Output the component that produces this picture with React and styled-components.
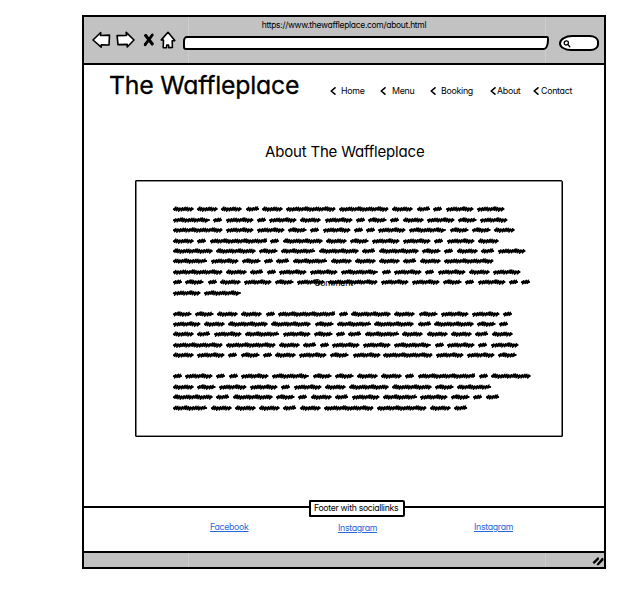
import React from "react";
import styled, { createGlobalStyle } from "styled-components";

const Global = createGlobalStyle`
  * { box-sizing: border-box; }
  body { margin: 0; background: #fff; color: #000; font-family: Inter, "Liberation Sans", sans-serif; font-feature-settings: "cv11"; }
`;

const seams = `linear-gradient(to right, transparent 104px, #cdcdcd 104px, #cdcdcd 105px, transparent 105px, transparent 461px, #cdcdcd 461px, #cdcdcd 462px, transparent 462px)`;

const Page = styled.div`
  width: 633px;
  height: 597px;
  padding: 15px 0 0 82px;
  overflow: hidden;
`;
const Browser = styled.div`
  width: 524px;
  height: 554px;
  border: 2px solid #000;
  display: flex;
  flex-direction: column;
`;
const Chrome = styled.header`
  height: 48px;
  flex: none;
  background: ${seams}, #c2c2c2;
  border-bottom: 2px solid #000;
`;
const Url = styled.div`
  height: 14px;
  line-height: 16px;
  text-align: center;
  font-size: 8.5px;
  white-space: nowrap;
  letter-spacing: -0.31px;
`;
const Toolbar = styled.div`
  display: flex;
  align-items: center;
  height: 20px;
  padding-left: 8px;
`;
const Icon = styled.svg`
  flex: none;
  display: block;
  margin-top: ${(p) => p.$top || 0}px;
  margin-right: ${(p) => p.$gap || 0}px;
  fill: #fff;
  stroke: #000;
  stroke-width: 1.6;
  stroke-linejoin: round;
  stroke-linecap: round;
`;
const Address = styled.div`
  width: 366px;
  height: 14px;
  margin-top: 3px;
  margin-right: 10px;
  background: #fff;
  border: 2px solid #000;
  border-radius: 4px 2px 5px 3px / 5px 3px 10px 3px;
`;
const Search = styled.div`
  width: 40px;
  height: 16px;
  margin-top: 3px;
  padding: 3px 0 0 2px;
  background: #fff;
  border: 2px solid #000;
  border-radius: 14px 10px 9px 13px / 9px 7px 7px 8px;
`;
const Masthead = styled.div`
  display: flex;
  height: 67px;
  flex: none;
  padding-left: 25px;
`;
const Title = styled.h1`
  margin: 4px 0 0;
  width: 221px;
  font-size: 24.8px;
  line-height: 32px;
  font-weight: 400;
  white-space: nowrap;
  letter-spacing: -0.2px;
  -webkit-text-stroke: 0.3px #000;
`;
const Nav = styled.nav`
  display: flex;
  height: 14px;
  margin-top: 19px;
`;
const NavItem = styled.a`
  display: flex;
  align-items: center;
  width: ${(p) => p.$w}px;
  gap: ${(p) => p.$gap}px;
  font-size: 8.8px;
  line-height: 14px;
  letter-spacing: -0.27px;
  white-space: nowrap;
`;
const Heading = styled.h2`
  margin: 0 0 0 181px;
  height: 48px;
  font-size: 15px;
  line-height: 40px;
  font-weight: 400;
  white-space: nowrap;
  letter-spacing: -0.19px;
`;
const Panel = styled.section`
  position: relative;
  flex: none;
  width: 428px;
  height: 257px;
  margin-left: 51px;
  padding: 23px 0 0 37px;
  border: 1px solid #000;
  border-radius: 1px 2px 1px 1px;
  box-shadow: inset 0 0 0 0.6px #222;
`;
const Copy = styled.div`
  display: flex;
  flex-direction: column;
`;
const Line = styled.div`
  display: flex;
  align-items: center;
  height: 10.45px;
  gap: 3.6px;
`;
const Scribble = styled.svg`
  display: block;
  flex: none;
  overflow: visible;
  fill: none;
  stroke: #000;
  stroke-linecap: round;
  stroke-linejoin: round;
`;
const Note = styled.span`
  position: absolute;
  left: 178px;
  top: 96px;
  font-size: 8.8px;
  line-height: 12px;
  letter-spacing: -0.2px;
`;
const Footer = styled.footer`
  position: relative;
  flex: none;
  height: 45px;
  margin-top: auto;
  border-top: 2px solid #000;
  display: flex;
`;
const Badge = styled.div`
  position: absolute;
  left: 225px;
  top: -8px;
  width: 96px;
  height: 17px;
  padding-left: 3px;
  background: #fff;
  border: 2px solid #000;
  border-radius: 1px 2px 2px 1px;
  font-size: 8.7px;
  line-height: 13px;
  letter-spacing: -0.31px;
  white-space: nowrap;
`;
const Social = styled.a`
  margin-top: ${(p) => p.$top}px;
  margin-left: ${(p) => p.$left}px;
  width: 40px;
  flex: none;
  color: #2968d8;
  font-size: 8.8px;
  line-height: 12px;
  letter-spacing: -0.33px;
  text-decoration: underline;
  white-space: nowrap;
`;
const Status = styled.div`
  flex: none;
  height: 16px;
  background: ${seams}, #c2c2c2;
  border-top: 2px solid #000;
  display: flex;
  justify-content: flex-end;
  padding: 3px 0 0 0;
`;

const WIDTHS = { a: 8.9, b: 13.1, c: 18.5, d: 20.6, e: 27.4, f: 34.1, g: 36.8, h: 39.6, i: 49.4, j: 57.1 };
const LINES = [
  "dddbdiidbaee",
  "gaeaedeacadece",
  "ieecaeaaegccd",
  "dajahdceeaed",
  "hhcfhbhcadbe",
  "fecabfdddbdi",
  "idbaeegaeaede",
  "acadeceieecaeaa",
  "eg",
  "",
  "ccddajahdceea",
  "edhhcfhbhca",
  "dbefecabfdddbd",
  "iidbaeegaeae",
  "deacadeceieec",
  "",
  "aeaaegccddajah",
  "dceeaedhhcf",
  "hbhcadbefecab",
  "fdddbdiidb",
];

const JITTER = [0.3, -0.6, 0.8, -0.1, 0.6, -0.8, 0.1, 0.4, -0.3];

function Word({ kind }) {
  const w = WIDTHS[kind];
  const seed = kind.charCodeAt(0);
  let d = "M0.8 3.3";
  let x = 2;
  let n = 0;
  while (x < w - 1.6) {
    const j = JITTER[(n * 5 + seed) % JITTER.length];
    d += `L${(x + 0.9).toFixed(1)} ${(1.4 + j * 0.6).toFixed(1)}L${(x - 0.5).toFixed(1)} ${(4.7 + j * 0.7).toFixed(1)}`;
    x += 2.2 + j * 0.7;
    n += 1;
  }
  d += `L${(w - 0.8).toFixed(1)} 2.9`;
  return (
    <Scribble width={w} height="6" viewBox={`0 0 ${w} 6`}>
      <path d={d} strokeWidth="1.35" />
      <path d={`M0.9 3.3L${w - 0.9} 3`} strokeWidth="2" />
    </Scribble>
  );
}

function Chevron() {
  return (
    <Icon width="6" height="8" viewBox="0 0 6 8">
      <path d="M5 .8L1.2 4 4.9 7.2" fill="none" />
    </Icon>
  );
}

const NAV = [
  { label: "Home", w: 50, gap: 5 },
  { label: "Menu", w: 50, gap: 6 },
  { label: "Booking", w: 60, gap: 5 },
  { label: "About", w: 43, gap: 1 },
  { label: "Contact", w: 44, gap: 2 },
];

export default function App() {
  return (
    <Page>
      <Global />
      <Browser>
        <Chrome>
          <Url>https://www.thewaffleplace.com/about.html</Url>
          <Toolbar>
            <Icon width="19" height="18" viewBox="0 0 19 18" $gap={5} $top={-2}>
              <path d="M1 9L8.7 1.5 8.5 4.5 17.5 4.1 17 14 9.3 13.7 9.2 16.2Z" />
            </Icon>
            <Icon width="19" height="18" viewBox="0 0 19 18" $gap={8} $top={-2}>
              <path d="M1.1 4.6L10.5 4.4 10.2 1.4 18 9 11.2 16 11.2 13.4 2 13.6Z" />
            </Icon>
            <Icon width="12" height="14" viewBox="0 0 12 14" $gap={5} $top={-3}>
              <path d="M2.4 2.5L9.2 11.2M9.3 2L2.2 11.8" strokeWidth="2.8" />
              <path d="M3 1.8L9.9 10.6M8.7 2.6L1.7 11.2" />
            </Icon>
            <Icon width="16" height="18" viewBox="0 0 16 18" $gap={7} $top={-2}>
              <path d="M8 1.3L1.3 8.9 3.5 9.1 3.2 16.6 6.5 16.8 6.7 14 8.6 14 8.8 16.7 12.4 16.4 12.2 9.8 14.8 9.6Z" />
            </Icon>
            <Address />
            <Search>
              <Icon width="8" height="8" viewBox="0 0 8 8">
                <path d="M5.1 4.8L6.8 6.7M5.4 2.8C5.3 5.6 1.2 5.8 1.2 3 1.3.3 5.5.2 5.4 2.8Z" strokeWidth="1.3" />
              </Icon>
            </Search>
          </Toolbar>
        </Chrome>
        <Masthead>
          <Title>The Waffleplace</Title>
          <Nav>
            {NAV.map((n) => (
              <NavItem key={n.label} $w={n.w} $gap={n.gap}>
                <Chevron />
                <span>{n.label}</span>
              </NavItem>
            ))}
          </Nav>
        </Masthead>
        <Heading>About The Waffleplace</Heading>
        <Panel>
          <Copy>
            {LINES.map((line, i) => (
              <Line key={i}>
                {line.split("").map((kind, k) => (
                  <Word key={k} kind={kind} />
                ))}
              </Line>
            ))}
          </Copy>
          <Note>Comment</Note>
        </Panel>
        <Footer>
          <Badge>Footer with sociallinks</Badge>
          <Social $left={126} $top={13}>Facebook</Social>
          <Social $left={88} $top={14}>Instagram</Social>
          <Social $left={96} $top={13}>Instagram</Social>
        </Footer>
        <Status>
          <Icon width="12" height="10" viewBox="0 0 12 10">
            <path d="M1.5 6.5L6 2M5.5 8.5L10.5 2.5M2.2 6.9L6.3 3M6.2 8.4L10.9 3.8" />
          </Icon>
        </Status>
      </Browser>
    </Page>
  );
}
